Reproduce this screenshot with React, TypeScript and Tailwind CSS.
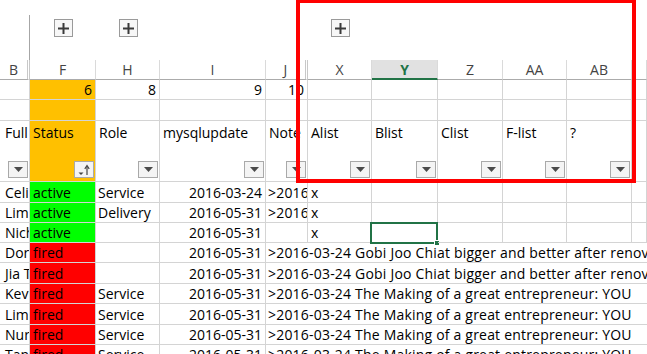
import React from 'react';

type Col = 'B' | 'F' | 'H' | 'I' | 'J' | 'X' | 'Y' | 'Z' | 'AA' | 'AB' | 'R';

const cols: Col[] = ['B', 'F', 'H', 'I', 'J', 'X', 'Y', 'Z', 'AA', 'AB', 'R'];

const W: Record<Col, string> = {
  B: 'w-[30px]',
  F: 'w-[66px]',
  H: 'w-[64px]',
  I: 'w-[106px]',
  J: 'w-[42px]',
  X: 'w-[64px]',
  Y: 'w-[66px]',
  Z: 'w-[65px]',
  AA: 'w-[64px]',
  AB: 'w-[65px]',
  R: 'w-[15px]',
};

const headers: Partial<Record<Col, string>> = {
  B: 'Full name',
  F: 'Status',
  H: 'Role',
  I: 'mysqlupdate',
  J: 'Note',
  X: 'Alist',
  Y: 'Blist',
  Z: 'Clist',
  AA: 'F-list',
  AB: '?',
};

const gobi = '>2016-03-24 Gobi Joo Chiat bigger and better after renovation';
const making = '>2016-03-24 The Making of a great entrepreneur: YOU';

const rows = [
  { name: 'Celine Tan', status: 'active', role: 'Service', date: '2016-03-24', note: making, x: 'x', h: 'h-[21px]' },
  { name: 'Lim Wei Ling', status: 'active', role: 'Delivery', date: '2016-05-31', note: gobi, x: 'x', h: 'h-[20px]' },
  { name: 'Nicholas Ong', status: 'active', role: '', date: '2016-05-31', note: '', x: 'x', h: 'h-[20px]', selected: true },
  { name: 'Doris Koh', status: 'fired', role: '', date: '2016-05-31', note: gobi, x: '', h: 'h-[20px]' },
  { name: 'Jia Tong', status: 'fired', role: '', date: '2016-05-31', note: gobi, x: '', h: 'h-[21px]' },
  { name: 'Kevin Lee', status: 'fired', role: 'Service', date: '2016-05-31', note: making, x: '', h: 'h-[20px]' },
  { name: 'Lim Hui Min', status: 'fired', role: 'Service', date: '2016-05-31', note: making, x: '', h: 'h-[21px]' },
  { name: 'Nurul Aini', status: 'fired', role: 'Service', date: '2016-05-31', note: making, x: '', h: 'h-[20px]' },
  { name: 'Tan Ah Kow', status: 'fired', role: 'Service', date: '2016-05-31', note: making, x: '', h: 'h-[20px]' },
];

function PlusBox() {
  return (
    <div className="w-[19px] h-[18px] border border-[#9a9a9a] bg-[#f7f7f7] flex items-center justify-center">
      <svg width="11" height="11" viewBox="0 0 11 11">
        <rect x="0" y="4.5" width="11" height="2" fill="#3a3a3a" />
        <rect x="4.5" y="0" width="2" height="11" fill="#3a3a3a" />
      </svg>
    </div>
  );
}

function FilterButton({ sort }: { sort?: boolean }) {
  return (
    <div className="w-[20px] h-[17px] border border-[#a9a9a9] bg-[#f4f4f4] flex items-center justify-center">
      {sort ? (
        <svg width="14" height="12" viewBox="0 0 14 12">
          <path d="M1.5 8.5 L6.5 8.5 L4 11 Z" fill="#444" />
          <path d="M10 11 L10 2.5" stroke="#444" strokeWidth="1.2" />
          <path d="M7.8 4.8 L10 1.5 L12.2 4.8" fill="none" stroke="#444" strokeWidth="1.2" />
        </svg>
      ) : (
        <svg width="9" height="5" viewBox="0 0 9 5">
          <path d="M0 0 L9 0 L4.5 5 Z" fill="#4a4a4a" />
        </svg>
      )}
    </div>
  );
}

const cell = 'shrink-0 h-full border-b border-[#d4d4d4] flex items-end pb-[1px] leading-[16px]';

export default function App() {
  return (
    <div className="relative w-[647px] h-[354px] overflow-hidden bg-white font-['Open_Sans',sans-serif] text-[14px] text-black">
      {/* outline / group bar */}
      <div className="flex h-[60px]">
        {cols.map((c) => (
          <div key={c} className={`${W[c]} shrink-0 h-full`}>
            {c === 'B' && (
              <div className="h-full pt-[15px]">
                <div className="h-full border-r border-[#a6a6a6]" />
              </div>
            )}
            {(c === 'F' || c === 'H' || c === 'X') && (
              <div className="flex justify-center pt-[19px]">
                <PlusBox />
              </div>
            )}
          </div>
        ))}
      </div>

      {/* column letters */}
      <div className="flex h-[20px]">
        {cols.map((c) => (
          <div
            key={c}
            className={`${W[c]} shrink-0 h-full flex items-center justify-center ${
              c === 'Y'
                ? 'bg-[#e1e1e1] border-b-2 border-b-[#217346] text-[#217346] font-bold'
                : 'border-b border-b-[#ababab] text-[#444]'
            } ${c === 'J' || c === 'B' ? 'border-r-[3px] border-double border-r-[#c8c8c8]' : 'border-r border-r-[#dadada]'}`}
          >
            {c === 'R' ? '' : c}
          </div>
        ))}
      </div>

      {/* row 1: numbers */}
      <div className="flex h-[20px]">
        {cols.map((c) => {
          const val: Partial<Record<Col, string>> = { F: '6', H: '8', I: '9', J: '10' };
          return (
            <div
              key={c}
              className={`${W[c]} ${cell} border-r justify-end pr-[3px] ${c === 'F' ? 'bg-[#ffc000]' : ''}`}
            >
              {val[c]}
            </div>
          );
        })}
      </div>

      {/* row 2: empty */}
      <div className="flex h-[21px]">
        {cols.map((c) => (
          <div
            key={c}
            className={`${W[c]} shrink-0 h-full border-r border-b border-[#d4d4d4] ${c === 'F' ? 'bg-[#ffc000]' : ''}`}
          />
        ))}
      </div>

      {/* table header row */}
      <div className="flex h-[61px]">
        {cols.map((c) => (
          <div
            key={c}
            className={`${W[c]} shrink-0 h-full border-r border-b border-[#d4d4d4] flex flex-col justify-between overflow-hidden ${
              c === 'F' ? 'bg-[#ffc000]' : ''
            }`}
          >
            <div className={`pt-[1px] whitespace-nowrap overflow-hidden ${c === 'B' ? 'pl-[5px]' : 'pl-[3px]'}`}>
              {headers[c] ?? ''}
            </div>
            {c !== 'R' && (
              <div className="flex justify-end pr-[1px] pb-[3px]">
                <FilterButton sort={c === 'F'} />
              </div>
            )}
          </div>
        ))}
      </div>

      {/* data rows */}
      {rows.map((r, i) => {
        const spill = r.note !== '' && r.x === '';
        return (
          <div key={i} className={`flex ${r.h}`}>
            <div className={`${W.B} ${cell} border-r pl-[5px] whitespace-nowrap overflow-hidden`}>{r.name}</div>
            <div
              className={`${W.F} ${cell} border-r pl-[3px] text-[#000] ${
                r.status === 'active' ? 'bg-[#00ff00]' : 'bg-[#ff0000]'
              }`}
            >
              {r.status}
            </div>
            <div className={`${W.H} ${cell} border-r pl-[2px] whitespace-nowrap overflow-hidden`}>{r.role}</div>
            <div className={`${W.I} ${cell} border-r pr-[3px] justify-end`}>{r.date}</div>
            <div
              className={`${W.J} ${cell} pl-[2px] whitespace-nowrap tracking-[0.2px] ${
                spill ? 'overflow-visible' : 'overflow-hidden border-r'
              }`}
            >
              {r.note}
            </div>
            {(['X', 'Y', 'Z', 'AA', 'AB', 'R'] as Col[]).map((c) => (
              <div key={c} className={`${W[c]} ${cell} relative pl-[3px] ${spill ? '' : 'border-r'}`}>
                {c === 'X' ? r.x : ''}
                {c === 'Y' && r.selected && (
                  <div className="absolute left-[-2px] top-[-1px] w-[68px] h-[22px] border-2 border-[#217346]">
                    <div className="absolute right-[-4px] bottom-[-4px] w-[6px] h-[6px] bg-[#217346] border border-white" />
                  </div>
                )}
              </div>
            ))}
          </div>
        );
      })}

      {/* annotation box */}
      <div className="absolute left-[296px] top-[-1px] w-[340px] h-[184px] border-4 border-[#ff0000]" />
    </div>
  );
}
